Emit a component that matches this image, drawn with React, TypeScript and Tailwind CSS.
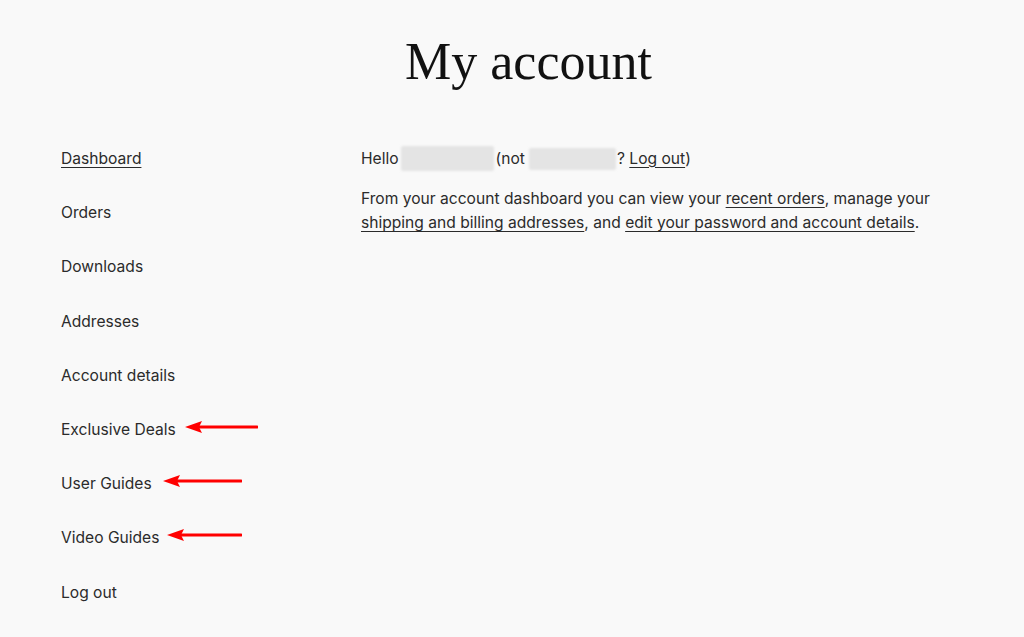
import React from 'react'

const navItems = [
  { label: 'Dashboard', active: true, arrow: 0, gap: 0 },
  { label: 'Orders', active: false, arrow: 0, gap: 0 },
  { label: 'Downloads', active: false, arrow: 0, gap: 0 },
  { label: 'Addresses', active: false, arrow: 0, gap: 0 },
  { label: 'Account details', active: false, arrow: 0, gap: 0 },
  { label: 'Exclusive Deals', active: false, arrow: 73, gap: 9 },
  { label: 'User Guides', active: false, arrow: 79, gap: 11 },
  { label: 'Video Guides', active: false, arrow: 75, gap: 8 },
  { label: 'Log out', active: false, arrow: 0, gap: 0 },
]

const Arrow: React.FC<{ width: number; gap: number }> = ({ width, gap }) => (
  <svg width={width} height="14" viewBox={`0 0 ${width} 14`} className="shrink-0" style={{ marginLeft: gap }}>
    <path d={`M14 7 H${width - 1}`} stroke="#ff0000" strokeWidth="3" strokeLinecap="round" />
    <path d="M0 7 L17 1 L14 7 L17 13 Z" fill="#ff0000" />
  </svg>
)

const App: React.FC = () => {
  return (
    <div className="min-h-[637px] w-full bg-[#f9f9f9] text-[#2b2b2b] font-['Inter','Liberation_Sans',sans-serif]">
      <h1 className="pt-[30px] pl-[33px] text-center font-['Liberation_Serif','DejaVu_Serif',serif] text-[52px] leading-[64px] text-[#111]">
        My account
      </h1>

      <div className="mt-[53px] flex px-[61px]">
        <nav className="w-[300px] shrink-0">
          <ul className="flex flex-col">
            {navItems.map((item) => (
              <li key={item.label} className="flex h-[54.2px] items-start">
                <a
                  href="#"
                  className={`text-[15.6px] leading-[24px] text-[#2b2b2b] ${item.active ? 'underline underline-offset-[3px] decoration-1' : ''}`}
                >
                  {item.label}
                </a>
                {item.arrow > 0 && (
                  <span className="mt-[2px] flex">
                    <Arrow width={item.arrow} gap={item.gap} />
                  </span>
                )}
              </li>
            ))}
          </ul>
        </nav>

        <div className="-mt-[1px] flex-1 text-[15.6px] leading-[24px]">
          <p className="flex items-center">
            <span>Hello</span>
            <span className="ml-[2px] mr-[2px] inline-block h-[25px] w-[93px] rounded-[2px] bg-[#e4e4e4] blur-[1px]" />
            <span>(not</span>
            <span className="ml-[4px] mr-[1px] inline-block h-[22px] w-[87px] rounded-[2px] bg-[#e4e4e4] blur-[1px]" />
            <span>
              ?{' '}
              <a href="#" className="underline underline-offset-[3px] decoration-1">
                Log out
              </a>
              )
            </span>
          </p>
          <p className="mt-[16px]">
            From your account dashboard you can view your{' '}
            <a href="#" className="underline underline-offset-[3px] decoration-1">
              recent orders
            </a>
            , manage your
            <br />
            <a href="#" className="underline underline-offset-[3px] decoration-1">
              shipping and billing addresses
            </a>
            , and{' '}
            <a href="#" className="underline underline-offset-[3px] decoration-1">
              edit your password and account details
            </a>
            .
          </p>
        </div>
      </div>
    </div>
  )
}

export default App
